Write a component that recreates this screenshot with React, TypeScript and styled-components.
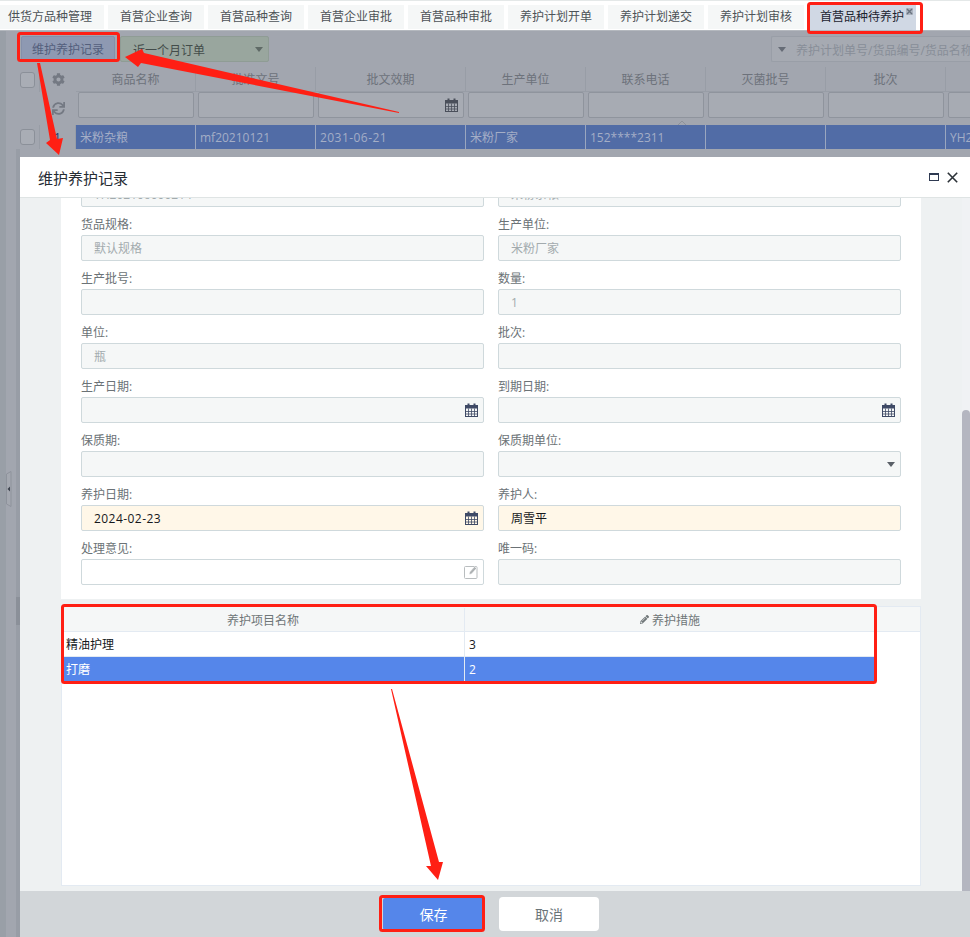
import React from "react";
import styled, { createGlobalStyle } from "styled-components";
import { FaCog, FaSync, FaPencilAlt } from "react-icons/fa";

const Global = createGlobalStyle`
  html, body { margin: 0; padding: 0; background: #fff; }
  * { box-sizing: border-box; }
  body { font-family: "Open Sans", "Noto Sans CJK SC", sans-serif; font-size: 12px; }
`;

const Screen = styled.div`
  position: relative;
  width: 970px;
  height: 937px;
  overflow: hidden;
  display: flex;
  flex-direction: column;
  background: #fff;
  border-top: 1px solid #e4e8e8;
`;

const TabBar = styled.div`
  height: 29px;
  flex: none;
  display: flex;
  gap: 4px;
  padding-top: 4px;
  background: #fff;
`;

const Tab = styled.div<{ $first?: boolean; $active?: boolean }>`
  position: relative;
  width: ${(p) => (p.$first ? "104px" : p.$active ? "108px" : "96px")};
  height: ${(p) => (p.$active ? "25px" : "24px")};
  padding-left: ${(p) => (p.$first ? "8px" : "12px")};
  line-height: 24px;
  color: ${(p) => (p.$active ? "#1c2430" : "#4d5358")};
  background: ${(p) => (p.$active ? "#d0d8e4" : "#f5f7f7")};
  white-space: nowrap;
`;

const TabClose = styled.svg`
  position: absolute;
  top: 3px;
  right: 3px;
  width: 7px;
  height: 7px;
`;

const Page = styled.div`
  flex: 1;
  min-height: 0;
  position: relative;
  overflow: hidden;
  background: #a2a6af;
  padding: 5px 0 0 16px;
  border-top: 1px solid #b4b8be;
  box-shadow: inset 6px 0 0 #999fa7;
`;

const Toolbar = styled.div`
  display: flex;
  height: 26px;
  padding-left: 5px;
  gap: 5px;
`;

const ToolButton = styled.div`
  width: 94px;
  height: 26px;
  line-height: 26px;
  text-align: center;
  color: #545f7c;
  background: #8e99b2;
  border: 1px solid #8490aa;
  border-radius: 2px;
`;

const ToolSelect = styled.div`
  width: 149px;
  height: 26px;
  padding: 1px 5px 0 12px;
  display: flex;
  align-items: center;
  justify-content: space-between;
  color: #434c4a;
  background: #99a69e;
  border: 1px solid #8f9c95;
  border-radius: 2px;
`;

const Caret = styled.i<{ $color: string }>`
  display: block;
  width: 0;
  height: 0;
  border-left: 4px solid transparent;
  border-right: 4px solid transparent;
  border-top: 5px solid ${(p) => p.$color};
`;

const SearchBox = styled.div`
  margin-left: auto;
  width: 199px;
  height: 26px;
  display: flex;
  align-items: center;
  gap: 10px;
  padding: 1px 0 0 6px;
  overflow: hidden;
  white-space: nowrap;
  color: #888e98;
  background: #a6aab2;
  border: 1px solid #999ea7;
  border-right: 0;
  border-radius: 2px 0 0 2px;
`;

const Grid = styled.div`
  margin-top: 5px;
  width: 1000px;
  position: relative;
`;

const GridRow = styled.div<{ $height: number; $selected?: boolean }>`
  display: grid;
  grid-template-columns: 24px 36px 120px 120px 150px 120px 120px 120px 120px 120px;
  height: ${(p) => p.$height}px;
  background: ${(p) => (p.$selected ? "#516ca6" : "transparent")};
`;

const HeadCell = styled.div`
  display: flex;
  align-items: center;
  justify-content: center;
  color: #6d727b;
  border-right: 1px solid #989da6;
  border-bottom: 1px solid #989da6;
`;

const FilterCell = styled.div`
  padding: 0 2px;
  height: 26px;
`;

const FilterBox = styled.div`
  height: 26px;
  display: flex;
  align-items: center;
  justify-content: flex-end;
  padding-right: 5px;
  background: #a7abb3;
  border: 1px solid #8f949d;
  border-radius: 2px;
`;

const IconCell = styled.div`
  display: flex;
  align-items: center;
  justify-content: center;
  color: #747983;
`;

const Checkbox = styled.div`
  width: 16px;
  height: 16px;
  background: #a9adb5;
  border: 1px solid #8b9099;
  border-radius: 3px;
  margin: 0 4px;
`;

const DataCell = styled.div`
  line-height: 26px;
  padding-left: 4px;
  color: #a4aec6;
  white-space: nowrap;
  overflow: hidden;
  border-right: 1px solid #9aa6bf;
`;

const CheckCell = styled.div<{ $height: number }>`
  height: ${(p) => p.$height}px;
  display: flex;
  align-items: center;
  background: #a2a6af;
  border-right: 1px solid #989da6;
`;

const NumberCell = styled(CheckCell)`
  justify-content: center;
  color: #25366a;
`;

const GridRest = styled.div`
  width: 4px;
  height: 800px;
  padding-top: 448px;
  background: #989da6;
`;

const RestChip = styled.div`
  height: 28px;
  background: #8b9099;
`;

const SortMark = styled.svg`
  position: absolute;
  left: 661px;
  top: 53px;
  width: 10px;
  height: 6px;
`;

const Splitter = styled.svg`
  position: absolute;
  left: 6px;
  top: 440px;
  width: 6px;
  height: 36px;
`;

const Dialog = styled.div`
  position: absolute;
  left: 20px;
  top: 156px;
  right: 0;
  bottom: 0;
  display: flex;
  flex-direction: column;
  background: #eef1f2;
`;

const DialogHeader = styled.div`
  height: 41px;
  flex: none;
  display: flex;
  align-items: center;
  gap: 8px;
  padding: 0 12px 0 18px;
  color: #262c33;
  font-size: 15px;
  background: #fff;
  border-bottom: 1px solid #dfe4e4;
`;

const DialogTitle = styled.div`
  flex: 1;
`;

const DialogBody = styled.div`
  flex: 1;
  min-height: 0;
  display: flex;
`;

const Scroller = styled.div`
  flex: 1;
  min-width: 0;
  overflow: hidden;
  padding: 0 41px;
`;

const Track = styled.div`
  width: 8px;
  flex: none;
  padding-top: 212px;
  background: #f0f2f4;
`;

const Thumb = styled.div`
  height: 100%;
  background: #b4b6c0;
  border-radius: 4px 4px 0 0;
`;

const FormCard = styled.div`
  margin-top: -51px;
  padding: 14px 20px;
  display: grid;
  grid-template-columns: 403px 403px;
  column-gap: 14px;
  row-gap: 8px;
  background: #fff;
`;

const Field = styled.div`
  height: 46px;
`;

const FieldLabel = styled.div`
  height: 20px;
  line-height: 20px;
  color: #6b7276;
  white-space: nowrap;
`;

const Input = styled.div<{ $tone: "disabled" | "required" | "plain" }>`
  height: 26px;
  display: flex;
  align-items: center;
  justify-content: space-between;
  padding: 0 5px 0 12px;
  background: ${(p) =>
    p.$tone === "required" ? "#fff7e8" : p.$tone === "plain" ? "#fff" : "#f5f7f7"};
  color: ${(p) => (p.$tone === "required" ? "#15181c" : "#a3abae")};
  border: 1px solid #cfd9dc;
  border-radius: 2px;
`;

const DateText = styled.span`
  letter-spacing: 0.45px;
`;

const TablePanel = styled.div`
  margin-top: 7px;
  height: 280px;
  background: #fff;
  border: 1px solid #e3eaf2;
`;

const TableHead = styled.div`
  display: grid;
  grid-template-columns: 403px 1fr;
  height: 25px;
  padding-top: 1px;
  background: #f5f7f7;
  border-bottom: 1px solid #e3eaf2;
`;

const HeadTitle = styled.div`
  display: flex;
  align-items: center;
  justify-content: center;
  gap: 3px;
  color: #6f7678;
  border-right: 1px solid #e3eaf2;
`;

const HeadTitleWide = styled(HeadTitle)`
  width: 410px;
  border-right: 0;
`;

const TableRow = styled.div<{ $selected?: boolean }>`
  display: grid;
  grid-template-columns: 403px 411px;
  width: 814px;
  height: 25px;
  line-height: 26px;
  color: ${(p) => (p.$selected ? "#fff" : "#15181c")};
  background: ${(p) => (p.$selected ? "#5586ea" : "#fff")};
  border-bottom: 1px solid #e3eaf2;
`;

const TableCell = styled.div`
  padding-left: 4px;
  height: 24px;
  border-right: 1px solid #e3eaf2;
`;

const Footer = styled.div`
  height: 46px;
  flex: none;
  display: flex;
  align-items: center;
  justify-content: center;
  gap: 15px;
  padding-right: 8px;
  background: #d2d6d9;
`;

const SaveButton = styled.button`
  width: 101px;
  height: 32px;
  border: 0;
  border-radius: 2px;
  background: #5586ea;
  color: #fff;
  font: 14px "Open Sans", "Noto Sans CJK SC", sans-serif;
`;

const CancelButton = styled.button`
  width: 100px;
  height: 34px;
  border: 0;
  border-radius: 4px;
  background: #fff;
  color: #6a7478;
  font: 14px "Open Sans", "Noto Sans CJK SC", sans-serif;
`;

const Annotations = styled.svg`
  position: absolute;
  left: 0;
  top: -1px;
  width: 970px;
  height: 937px;
  pointer-events: none;
`;

const CalendarIcon = ({ color = "#3f4a66", size = 13 }: { color?: string; size?: number }) => (
  <svg width={size} height={size + 1} viewBox="0 0 13 14" fill="none">
    <rect x="0.5" y="2.5" width="12" height="11" fill="none" stroke={color} />
    <rect x="0.5" y="2.5" width="12" height="3" fill={color} />
    <rect x="2.5" y="0.5" width="2" height="3.5" fill={color} />
    <rect x="8.5" y="0.5" width="2" height="3.5" fill={color} />
    <path d="M0.5 8.5H12.5M0.5 11H12.5M3.5 5.5V13.5M6.5 5.5V13.5M9.5 5.5V13.5" stroke={color} strokeWidth="0.8" />
  </svg>
);

const EditIcon = () => (
  <svg width="14" height="14" viewBox="0 0 14 14" fill="none">
    <rect x="0.5" y="1.5" width="12.5" height="12" rx="1" stroke="#b9bdbf" />
    <path d="M5 9.5 L5.6 7 L10.6 1.5 L12.6 3.4 L7.5 9 Z" fill="#aeb2b4" stroke="#fff" strokeWidth="0.6" />
  </svg>
);

type FieldDef = {
  label: string;
  value?: string;
  tone?: "disabled" | "required" | "plain";
  icon?: "cal" | "caret" | "edit";
  date?: boolean;
};

const fields: FieldDef[] = [
  { label: "商品编号:", value: "YH202106000214" },
  { label: "商品名称:", value: "米粉杂粮" },
  { label: "货品规格:", value: "默认规格" },
  { label: "生产单位:", value: "米粉厂家" },
  { label: "生产批号:" },
  { label: "数量:", value: "1" },
  { label: "单位:", value: "瓶" },
  { label: "批次:" },
  { label: "生产日期:", icon: "cal" },
  { label: "到期日期:", icon: "cal" },
  { label: "保质期:" },
  { label: "保质期单位:", icon: "caret" },
  { label: "养护日期:", value: "2024-02-23", tone: "required", icon: "cal", date: true },
  { label: "养护人:", value: "周雪平", tone: "required" },
  { label: "处理意见:", tone: "plain", icon: "edit" },
  { label: "唯一码:" },
];

const tabs = [
  "供货方品种管理",
  "首营企业查询",
  "首营品种查询",
  "首营企业审批",
  "首营品种审批",
  "养护计划开单",
  "养护计划递交",
  "养护计划审核",
];

const heads = ["商品名称", "批准文号", "批文效期", "生产单位", "联系电话", "灭菌批号", "批次", ""];
const cells = ["米粉杂粮", "mf20210121", "2031-06-21", "米粉厂家", "152****2311", "", "", "YH202106"];

export default function App() {
  return (
    <Screen>
      <Global />
      <TabBar>
        {tabs.map((t, i) => (
          <Tab key={t} $first={i === 0}>
            {t}
          </Tab>
        ))}
        <Tab $active>
          首营品种待养护
          <TabClose viewBox="0 0 7 7">
            <rect width="7" height="7" fill="#aeb6c2" />
            <path d="M1 1L6 6M6 1L1 6" stroke="#69727f" strokeWidth="1.4" />
          </TabClose>
        </Tab>
      </TabBar>
      <Page>
        <Toolbar>
          <ToolButton>维护养护记录</ToolButton>
          <ToolSelect>
            近一个月订单
            <Caret $color="#5f6a66" />
          </ToolSelect>
          <SearchBox>
            <Caret $color="#666c76" />
            养护计划单号/货品编号/货品名称/批号
          </SearchBox>
        </Toolbar>
        <Grid>
          <GridRow $height={25}>
            <CheckCell $height={25}>
              <Checkbox />
            </CheckCell>
            <IconCell>
              <FaCog size={13} />
            </IconCell>
            {heads.map((h, i) => (
              <HeadCell key={i}>{h}</HeadCell>
            ))}
          </GridRow>
          <GridRow $height={33}>
            <div />
            <IconCell>
              <FaSync size={13} />
            </IconCell>
            {heads.map((_, i) => (
              <FilterCell key={i}>
                <FilterBox>{i === 2 && <CalendarIcon color="#4a4f5a" />}</FilterBox>
              </FilterCell>
            ))}
          </GridRow>
          <GridRow $height={24} $selected>
            <CheckCell $height={24}>
              <Checkbox />
            </CheckCell>
            <NumberCell $height={24}>1</NumberCell>
            {cells.map((c, i) => (
              <DataCell key={i}>{i === 2 ? <DateText>{c}</DateText> : c}</DataCell>
            ))}
          </GridRow>
          <GridRest>
            <RestChip />
          </GridRest>
          <SortMark viewBox="0 0 10 6" fill="none">
            <path d="M1 5L5 1L9 5" stroke="#8c919a" />
          </SortMark>
        </Grid>
        <Splitter viewBox="0 0 6 36" fill="none">
          <path d="M5 0.5L0.5 3V33L5 35.5Z" fill="#a4a8b0" stroke="#8e939c" />
          <path d="M4 15.5V20.5L1.5 18Z" fill="#3d434e" />
        </Splitter>
      </Page>
      <Dialog>
        <DialogHeader>
          <DialogTitle>维护养护记录</DialogTitle>
          <svg width="10" height="8" viewBox="0 0 10 8" fill="none">
            <rect x="0.5" y="0.5" width="9" height="7" stroke="#2f3a52" />
            <rect x="0.5" y="0.5" width="9" height="1.5" fill="#2f3a52" />
          </svg>
          <svg width="11" height="11" viewBox="0 0 11 11" fill="none">
            <path d="M0.8 0.8L10.2 10.2M10.2 0.8L0.8 10.2" stroke="#2c3238" strokeWidth="1.6" />
          </svg>
        </DialogHeader>
        <DialogBody>
          <Scroller>
            <FormCard>
              {fields.map((f) => (
                <Field key={f.label}>
                  <FieldLabel>{f.label}</FieldLabel>
                  <Input $tone={f.tone ?? "disabled"}>
                    {f.date ? <DateText>{f.value}</DateText> : <span>{f.value}</span>}
                    {f.icon === "cal" && <CalendarIcon />}
                    {f.icon === "caret" && <Caret $color="#5a6068" />}
                    {f.icon === "edit" && <EditIcon />}
                  </Input>
                </Field>
              ))}
            </FormCard>
            <TablePanel>
              <TableHead>
                <HeadTitle>养护项目名称</HeadTitle>
                <HeadTitleWide>
                  <FaPencilAlt size={9} />
                  养护措施
                </HeadTitleWide>
              </TableHead>
              <TableRow>
                <TableCell>精油护理</TableCell>
                <TableCell>3</TableCell>
              </TableRow>
              <TableRow $selected>
                <TableCell>打磨</TableCell>
                <TableCell>2</TableCell>
              </TableRow>
            </TablePanel>
          </Scroller>
          <Track>
            <Thumb />
          </Track>
        </DialogBody>
        <Footer>
          <SaveButton>保存</SaveButton>
          <CancelButton>取消</CancelButton>
        </Footer>
      </Dialog>
      <Annotations viewBox="0 0 970 937" fill="none">
        <g stroke="#ff1f14" strokeWidth="3">
          <rect x="808.5" y="3.5" width="113" height="29" rx="2" />
          <rect x="18.5" y="33.5" width="100" height="27" rx="2" />
          <rect x="62.5" y="605.5" width="813" height="77" rx="2" />
          <rect x="380.5" y="896.5" width="103" height="34" rx="2" />
        </g>
        <g fill="#ff1f14">
          <polygon points="125,57 142,49 144,53 399,112 399,113 141,63 138,67" />
          <polygon points="37,63 40,63 57,139 63,138 59,155 46,143 50,140" />
          <polygon points="391,689 392,689 439,862 443,862 438,880 426,866 431,866" />
        </g>
      </Annotations>
    </Screen>
  );
}
